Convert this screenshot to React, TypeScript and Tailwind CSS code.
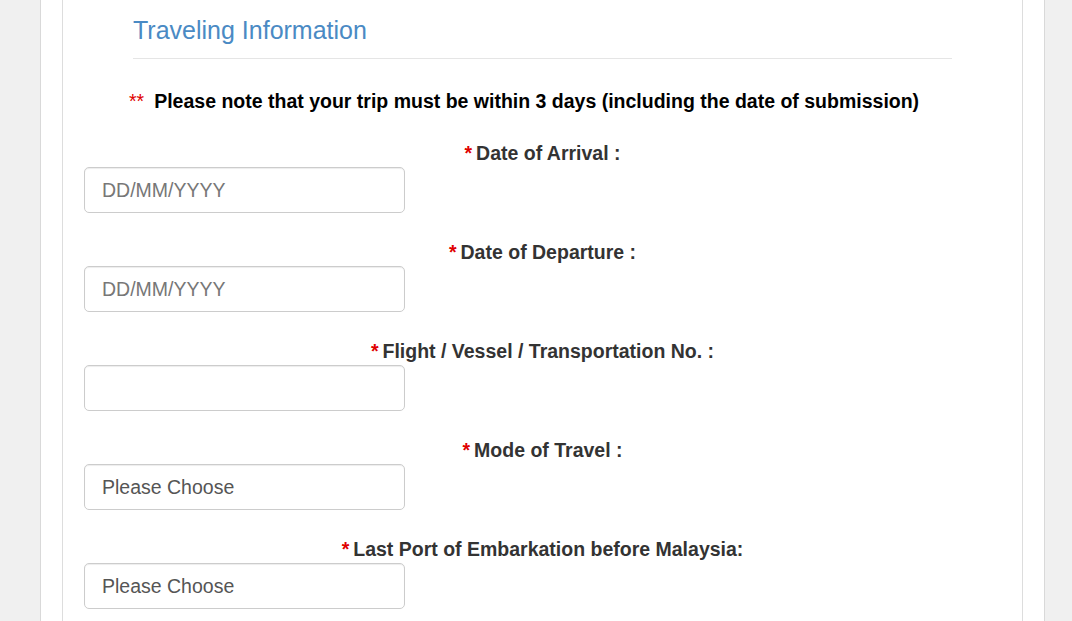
import React from "react";

const fields = [
  { label: "Date of Arrival :", placeholder: "DD/MM/YYYY", kind: "date" },
  { label: "Date of Departure :", placeholder: "DD/MM/YYYY", kind: "date" },
  { label: "Flight / Vessel / Transportation No. :", placeholder: "", kind: "text" },
  { label: "Mode of Travel :", placeholder: "Please Choose", kind: "select" },
  { label: "Last Port of Embarkation before Malaysia:", placeholder: "Please Choose", kind: "select" },
];

function Field({ label, placeholder, kind }: { label: string; placeholder: string; kind: string }) {
  return (
    <div className="mb-[26px]">
      <div className="h-[27px] text-center text-[19.5px] leading-[27px] font-bold text-[#333]">
        <span className="text-[#e00000] mr-[4px]">*</span>
        {label}
      </div>
      <div
        className={
          "w-[321px] h-[46px] rounded-[5px] border border-[#ccc] bg-white px-[17px] pt-[2px] flex items-center text-[19.5px] shadow-[inset_0_1px_1px_rgba(0,0,0,0.075)] " +
          (kind === "select" ? "text-[#555]" : "text-[#777]")
        }
      >
        {placeholder}
      </div>
    </div>
  );
}

export default function App() {
  return (
    <div className="h-[621px] overflow-hidden bg-[#f0f0f0] font-['Liberation_Sans',Arial,sans-serif]">
      <div className="ml-[40px] w-[1005px] h-full bg-white border-x border-[#d9d9d9] px-[21px]">
        <div className="h-full border-x border-[#ddd] bg-white">
          <div className="px-[70px] pt-[17px]">
            <h2 className="text-[25px] leading-[27.5px] text-[#4a8ac4] font-normal">
              Traveling Information
            </h2>
            <div className="mt-[13px] h-px bg-[#e5e5e5]" />
          </div>

          <p className="mt-[29px] pl-[66px] text-[19.5px] leading-[26px] font-bold text-black">
            <span className="text-[#e00000] font-normal mr-[10px]">**</span>
            Please note that your trip must be within 3 days (including the date of submission)
          </p>

          <div className="mt-[26px] px-[21px]">
            {fields.map((f) => (
              <Field key={f.label} {...f} />
            ))}
          </div>
        </div>
      </div>
    </div>
  );
}
